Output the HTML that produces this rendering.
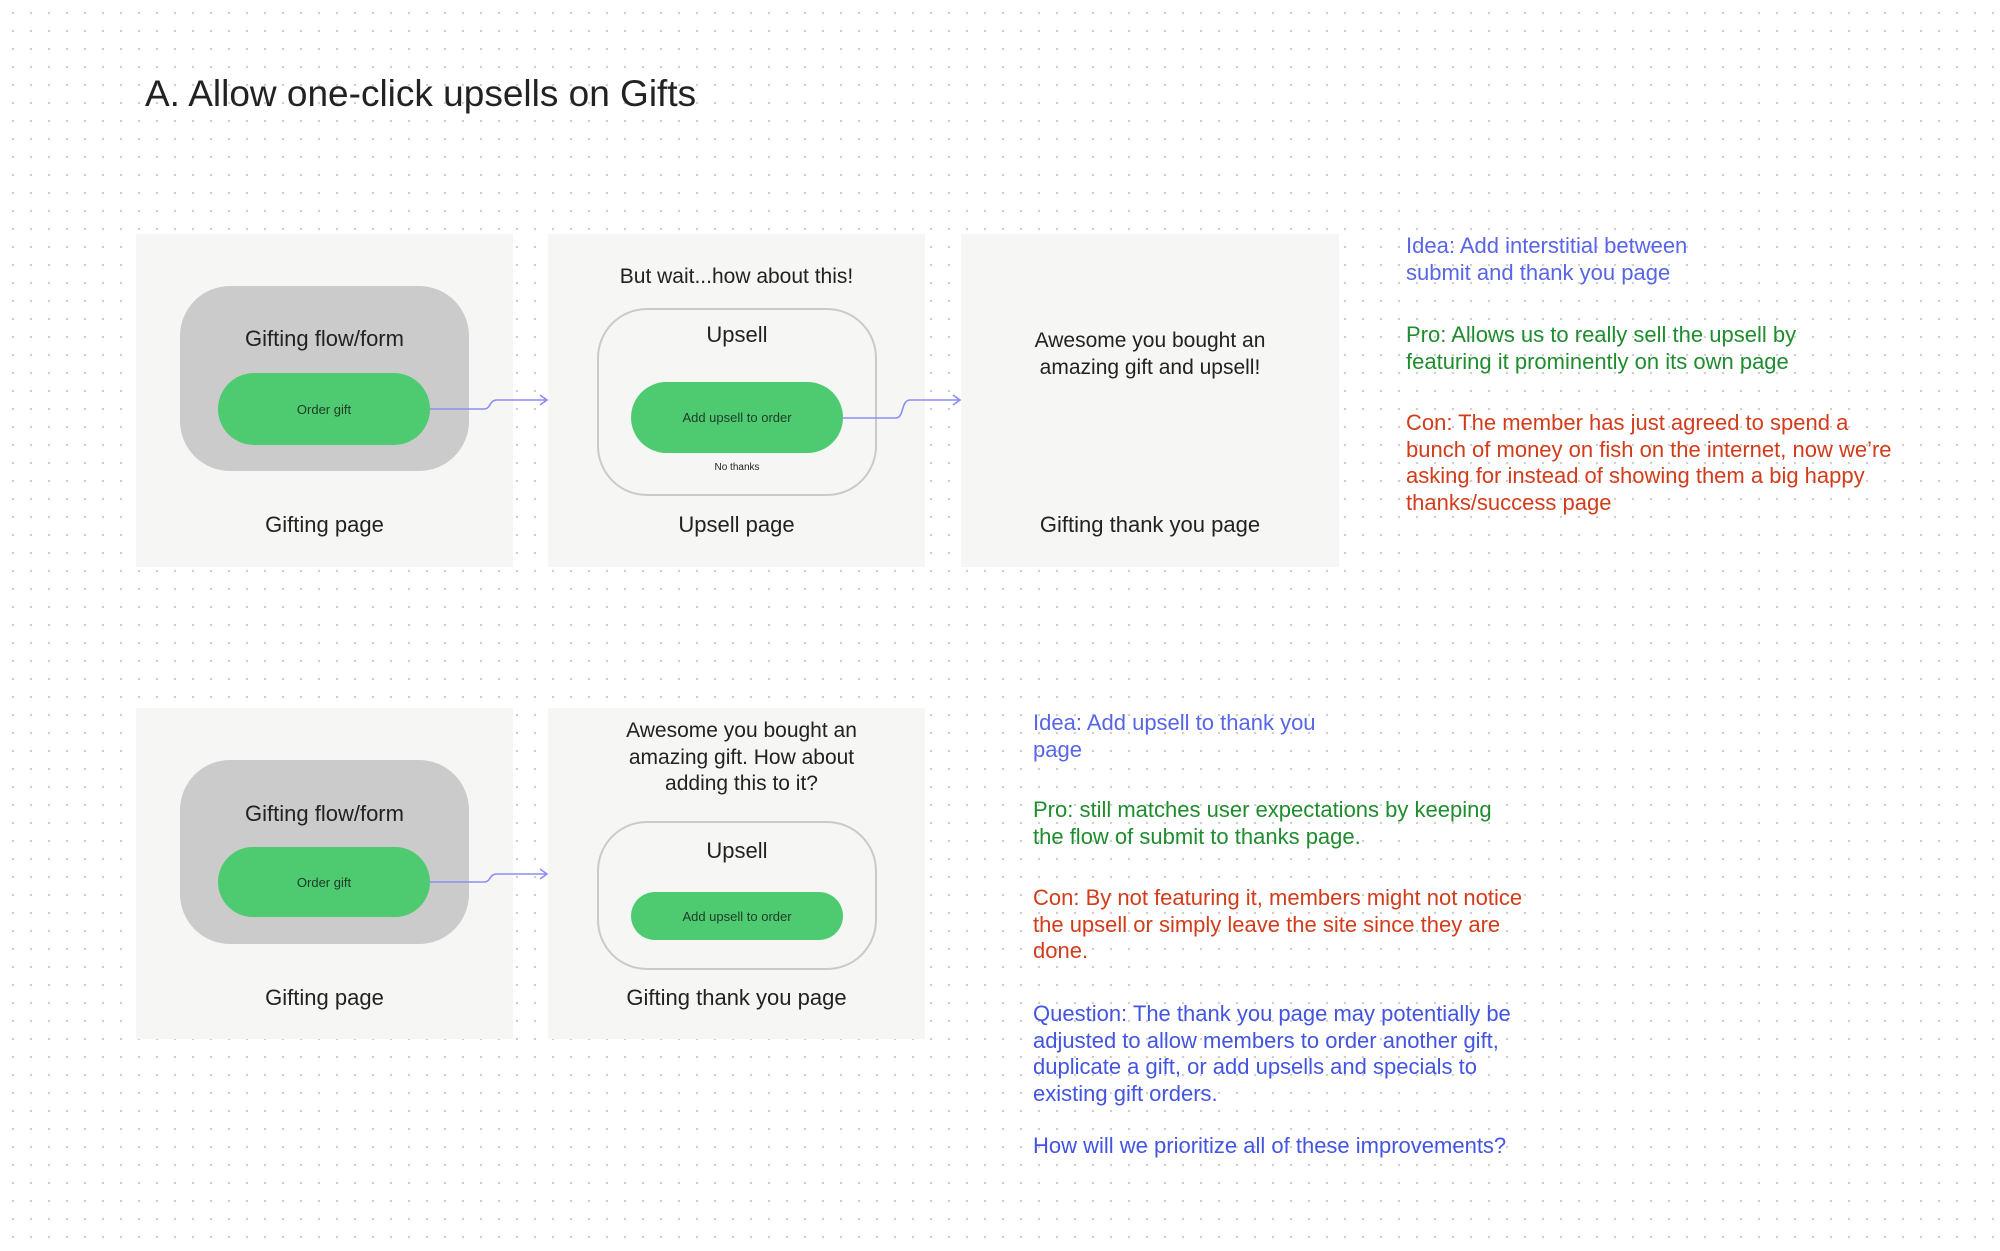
<!DOCTYPE html>
<html><head><meta charset="utf-8"><style>
*{margin:0;padding:0;box-sizing:border-box}
body{width:2000px;height:1251px;position:relative;overflow:hidden;font-family:"Liberation Sans",sans-serif;color:#222;
background-color:#fff;background-image:radial-gradient(circle,#cfcfcf 1.1px,transparent 1.4px);background-size:18px 18px;background-position:4px 4px}
.a{position:absolute}
.p{position:absolute;background:#f6f6f5}
.t{position:absolute;text-align:center;white-space:nowrap}
.g{position:absolute;background:#cbcbcb;border-radius:50px}
.b{position:absolute;background:#4ecb71;border-radius:36px;display:flex;align-items:center;justify-content:center;font-size:13px;color:#1f3a27}
.o{position:absolute;border:2.5px solid #cacaca;border-radius:50px}
.n{position:absolute;font-size:22px;line-height:26.5px;white-space:nowrap}
.bl{color:#5765e6}.gr{color:#1f8c2e}.rd{color:#d23c1b}.qb{color:#4354e0}
</style></head><body>
<div class="a" style="left:145px;top:73px;font-size:37px;color:#222">A. Allow one-click upsells on Gifts</div>

<!-- Row 1 -->
<div class="p" style="left:136px;top:234px;width:377px;height:333px"></div>
<div class="p" style="left:548px;top:234px;width:377px;height:333px"></div>
<div class="p" style="left:961px;top:234px;width:378px;height:333px"></div>

<div class="g" style="left:180px;top:286px;width:289px;height:185px"></div>
<div class="t" style="left:180px;width:289px;top:326px;font-size:22px">Gifting flow/form</div>
<div class="b" style="left:218px;top:373px;width:212px;height:72px">Order gift</div>
<div class="t" style="left:136px;width:377px;top:512px;font-size:22px">Gifting page</div>

<div class="t" style="left:548px;width:377px;top:265px;font-size:21px">But wait...how about this!</div>
<div class="o" style="left:597px;top:308px;width:280px;height:188px"></div>
<div class="t" style="left:597px;width:280px;top:322px;font-size:22px">Upsell</div>
<div class="b" style="left:631px;top:382px;width:212px;height:71px">Add upsell to order</div>
<div class="t" style="left:597px;width:280px;top:462px;font-size:10px">No thanks</div>
<div class="t" style="left:548px;width:377px;top:512px;font-size:22px">Upsell page</div>

<div class="t" style="left:961px;width:378px;top:328px;font-size:21px;line-height:26.5px">Awesome you bought an<br>amazing gift and upsell!</div>
<div class="t" style="left:961px;width:378px;top:512px;font-size:22px">Gifting thank you page</div>

<div class="n bl" style="left:1406px;top:233px">Idea: Add interstitial between<br>submit and thank you page</div>
<div class="n gr" style="left:1406px;top:322px">Pro: Allows us to really sell the upsell by<br>featuring it prominently on its own page</div>
<div class="n rd" style="left:1406px;top:410px">Con: The member has just agreed to spend a<br>bunch of money on fish on the internet, now we’re<br>asking for instead of showing them a big happy<br>thanks/success page</div>

<!-- Row 2 -->
<div class="p" style="left:136px;top:708px;width:377px;height:331px"></div>
<div class="p" style="left:548px;top:708px;width:377px;height:331px"></div>

<div class="g" style="left:180px;top:760px;width:289px;height:184px"></div>
<div class="t" style="left:180px;width:289px;top:801px;font-size:22px">Gifting flow/form</div>
<div class="b" style="left:218px;top:847px;width:212px;height:70px">Order gift</div>
<div class="t" style="left:136px;width:377px;top:985px;font-size:22px">Gifting page</div>

<div class="t" style="left:548px;width:387px;top:718px;font-size:21px;line-height:26.5px">Awesome you bought an<br>amazing gift. How about<br>adding this to it?</div>
<div class="o" style="left:597px;top:821px;width:280px;height:149px"></div>
<div class="t" style="left:597px;width:280px;top:838px;font-size:22px">Upsell</div>
<div class="b" style="left:631px;top:892px;width:212px;height:48px">Add upsell to order</div>
<div class="t" style="left:548px;width:377px;top:985px;font-size:22px">Gifting thank you page</div>

<div class="n bl" style="left:1033px;top:710px">Idea: Add upsell to thank you<br>page</div>
<div class="n gr" style="left:1033px;top:797px">Pro: still matches user expectations by keeping<br>the flow of submit to thanks page.</div>
<div class="n rd" style="left:1033px;top:885px">Con: By not featuring it, members might not notice<br>the upsell or simply leave the site since they are<br>done.</div>
<div class="n qb" style="left:1033px;top:1001px">Question: The thank you page may potentially be<br>adjusted to allow members to order another gift,<br>duplicate a gift, or add upsells and specials to<br>existing gift orders.</div>
<div class="n qb" style="left:1033px;top:1133px">How will we prioritize all of these improvements?</div>

<svg class="a" style="left:0;top:0" width="2000" height="1251">
<g fill="none" stroke="#8b8ef2" stroke-width="1.6">
<path d="M430 409 H484 C491 409 489 400 497 400 H546 M540 395 L547 400 L540 405"/>
<path d="M843 418 H896 C904 418 901 400 910 400 H959 M953 395 L960 400 L953 405"/>
<path d="M430 882 H484 C491 882 489 874 497 874 H546 M540 869 L547 874 L540 879"/>
</g></svg>
</body></html>
